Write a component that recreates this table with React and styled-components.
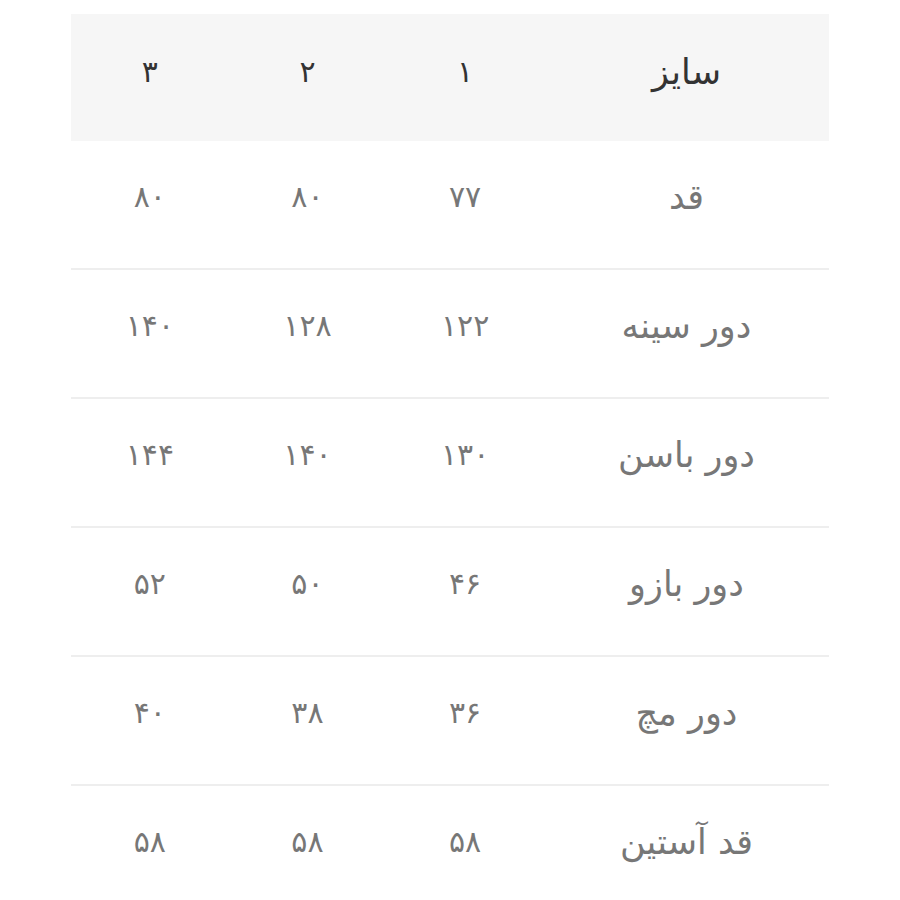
import styled, { createGlobalStyle } from "styled-components";

const GlobalStyle = createGlobalStyle`
  html, body {
    margin: 0;
    padding: 0;
    background: #fff;
  }
  body {
    font-family: "DejaVu Sans", "Noto Sans", sans-serif;
  }
`;

const header = ["سایز", "۱", "۲", "۳"];

const rows = [
  ["قد", "۷۷", "۸۰", "۸۰"],
  ["دور سینه", "۱۲۲", "۱۲۸", "۱۴۰"],
  ["دور باسن", "۱۳۰", "۱۴۰", "۱۴۴"],
  ["دور بازو", "۴۶", "۵۰", "۵۲"],
  ["دور مچ", "۳۶", "۳۸", "۴۰"],
  ["قد آستین", "۵۸", "۵۸", "۵۸"],
];

function App() {
  return (
    <Page>
      <GlobalStyle />
      <SizeTable dir="rtl">
        <thead>
          <tr>
            {header.map((h, i) => (
              <HeadCell key={i} label={i === 0}>
                {h}
              </HeadCell>
            ))}
          </tr>
        </thead>
        <tbody>
          {rows.map((row, r) => (
            <Row key={r}>
              {row.map((c, i) => (
                <Cell key={i} label={i === 0}>
                  {c}
                </Cell>
              ))}
            </Row>
          ))}
        </tbody>
      </SizeTable>
    </Page>
  );
}

export default App;

const Page = styled.div`
  padding: 14px 71px 0 71px;
`;

const SizeTable = styled.table`
  width: 758px;
  border-collapse: collapse;
  table-layout: fixed;
`;

const HeadCell = styled.th`
  width: ${({ label }) => (label ? "285px" : "157.6px")};
  height: 115px;
  padding: 0 0 12px 0;
  background: #f6f6f6;
  color: #333333;
  font-size: ${({ label }) => (label ? "35px" : "30px")};
  font-weight: normal;
  line-height: 1.2;
  text-align: center;
  vertical-align: middle;
`;

const Row = styled.tr`
  border-top: 2px solid #eeeeee;
  &:first-child {
    border-top: 0;
  }
`;

const Cell = styled.td`
  height: 111px;
  padding: 0 0 16px 0;
  color: #777777;
  font-size: ${({ label }) => (label ? "35px" : "30px")};
  line-height: 1.2;
  text-align: center;
  vertical-align: middle;
`;
